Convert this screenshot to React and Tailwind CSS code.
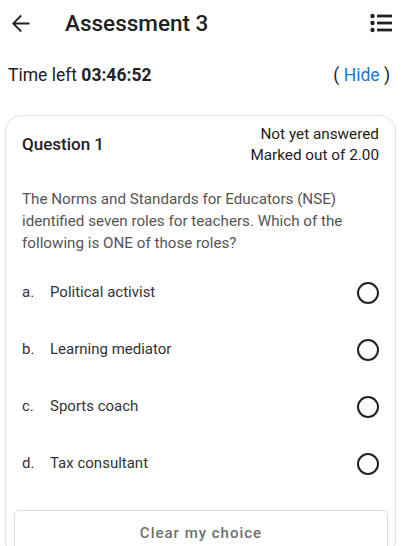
const options = [
  { letter: 'a.', text: 'Political activist' },
  { letter: 'b.', text: 'Learning mediator' },
  { letter: 'c.', text: 'Sports coach' },
  { letter: 'd.', text: 'Tax consultant' },
]

function BackIcon() {
  return (
    <svg width="27" height="27" viewBox="0 0 24 24" className="text-[#222]">
      <path fill="currentColor" d="M20 11.1H7.6l5.6-5.6-1.1-1.2L4.4 12l7.7 7.7 1.1-1.2-5.6-5.6H20z" />
    </svg>
  )
}

function ListIcon() {
  return (
    <svg width="22" height="20" viewBox="0 0 22 20" className="text-[#222]">
      <circle cx="2.5" cy="3" r="2.2" fill="currentColor" />
      <circle cx="2.5" cy="10" r="2.2" fill="currentColor" />
      <circle cx="2.5" cy="17" r="2.2" fill="currentColor" />
      <rect x="7" y="1.6" width="15" height="2.8" fill="currentColor" />
      <rect x="7" y="8.6" width="15" height="2.8" fill="currentColor" />
      <rect x="7" y="15.6" width="15" height="2.8" fill="currentColor" />
    </svg>
  )
}

export default function App() {
  return (
    <div className="w-[409px] h-[546px] overflow-hidden bg-white font-['Roboto',sans-serif]">
      {/* Top bar */}
      <div className="h-[46px] flex items-center pl-[7px] pr-[17px]">
        <BackIcon />
        <h1 className="ml-[31px] text-[22.5px] font-medium text-[#222] leading-none">Assessment 3</h1>
        <div className="ml-auto">
          <ListIcon />
        </div>
      </div>

      {/* Timer */}
      <div className="h-[58px] flex items-center justify-between pl-[8px] pr-[19px] text-[17.5px] text-[#222]">
        <div>
          Time left <span className="font-bold">03:46:52</span>
        </div>
        <div>
          ( <span className="text-[#1976d2]">Hide</span> )
        </div>
      </div>

      {/* Question card */}
      <div className="ml-[5px] mt-[11px] w-[391px] border border-[#e2e2e2] rounded-[16px] pl-[16px] pr-[16px] pt-[8px]">
        <div className="flex items-center justify-between">
          <div className="text-[17px] font-medium text-[#222]">Question 1</div>
          <div className="text-right text-[15.3px] leading-[21px] text-[#222]">
            <div>Not yet answered</div>
            <div>Marked out of 2.00</div>
          </div>
        </div>

        <p className="mt-[22px] text-[15.2px] leading-[22px] text-[#555]">
          The Norms and Standards for Educators (NSE) identified seven roles for teachers. Which of the following is ONE of those roles?
        </p>

        <div className="mt-[10px]">
          {options.map((o) => (
            <div key={o.letter} className="h-[57px] flex items-center text-[15px] text-[#333]">
              <span className="w-[28px]">{o.letter}</span>
              <span>{o.text}</span>
              <span className="ml-auto w-[22px] h-[22px] rounded-full border-2 border-[#222]" />
            </div>
          ))}
        </div>

        <button className="mt-[18px] -ml-[8px] w-[374px] h-[46px] border border-[#dcdcdc] rounded-[5px] text-[15px] font-medium tracking-[1px] text-[#6f6f6f]">
          Clear my choice
        </button>
      </div>
    </div>
  )
}
